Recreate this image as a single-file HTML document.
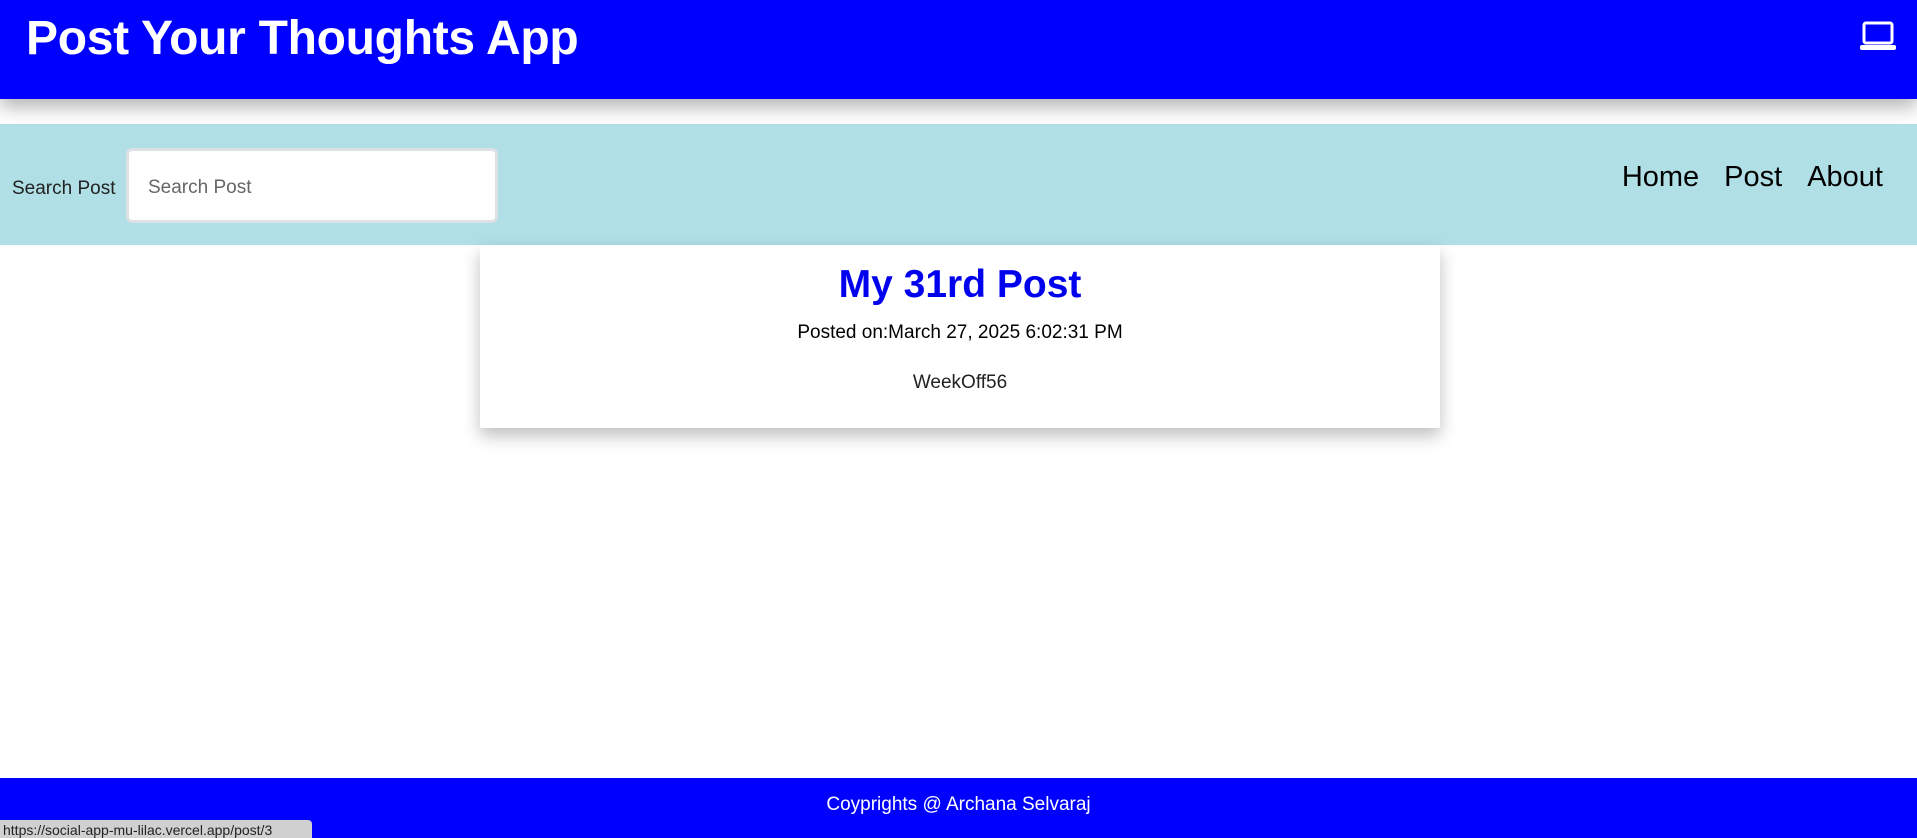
<!DOCTYPE html>
<html><head><style>
body{margin:0;width:1917px;height:838px;position:relative;overflow:hidden;font-family:"Liberation Sans",sans-serif;background:#fff}
.hd{position:absolute;left:0;top:0;width:1917px;height:99px;background:#0000ff;box-shadow:0 8px 18px rgba(0,0,0,.3)}
.hd h1{margin:0;position:absolute;left:26px;top:11px;font-size:48px;color:#fff;font-weight:bold;letter-spacing:-0.3px}
.nav{position:absolute;left:0;top:124px;width:1917px;height:121px;background:#b0dfe5}
.lbl{position:absolute;left:12px;top:54px;font-size:19px;color:#222}
.inp{position:absolute;left:126px;top:24px;width:372px;height:75px;background:#fff;border:3px solid #dde1e6;border-radius:6px;box-sizing:border-box}
.inp span{position:absolute;left:19px;top:26px;font-size:19px;color:#666}
.links{position:absolute;right:34px;top:37px;font-size:29px;color:#000}
.links span{margin-left:25px}
.card{position:absolute;left:480px;top:245px;width:960px;height:183px;background:#fff;box-shadow:0 8px 16px rgba(0,0,0,.25);text-align:center}
.card h2{margin:0;position:absolute;top:18px;width:100%;font-size:39px;color:#0000ee;font-weight:bold}
.card .d{position:absolute;top:77px;width:100%;font-size:19px;color:#000}
.card .b{position:absolute;top:127px;width:100%;font-size:19px;color:#222}
.ft{position:absolute;left:0;top:778px;width:1917px;height:60px;background:#0000ff;color:#fff;text-align:center;font-size:19px}
.ft div{padding-top:16px}
.st{position:absolute;left:0;top:820px;width:312px;height:18px;background:#d0d0d0;border-top-right-radius:4px;font-size:14px;color:#222;padding-left:3px;box-sizing:border-box;line-height:20px;overflow:hidden;white-space:nowrap}
</style></head><body>
<div class="hd"><h1>Post Your Thoughts App</h1>
<svg style="position:absolute;left:1860px;top:21px" width="36" height="30" viewBox="0 0 36 30"><rect x="4" y="2" width="28" height="20" rx="2" fill="none" stroke="#fff" stroke-width="3"/><rect x="0" y="24" width="36" height="5" rx="2" fill="#fff"/></svg></div>
<div class="nav"><div class="lbl">Search Post</div><div class="inp"><span>Search Post</span></div>
<div class="links"><span>Home</span><span>Post</span><span>About</span></div></div>
<div class="card"><h2>My 31rd Post</h2><div class="d">Posted on:March 27, 2025 6:02:31 PM</div><div class="b">WeekOff56</div></div>
<div class="ft"><div>Coyprights @ Archana Selvaraj</div></div>
<div class="st">https://social-app-mu-lilac.vercel.app/post/3</div>
</body></html>
